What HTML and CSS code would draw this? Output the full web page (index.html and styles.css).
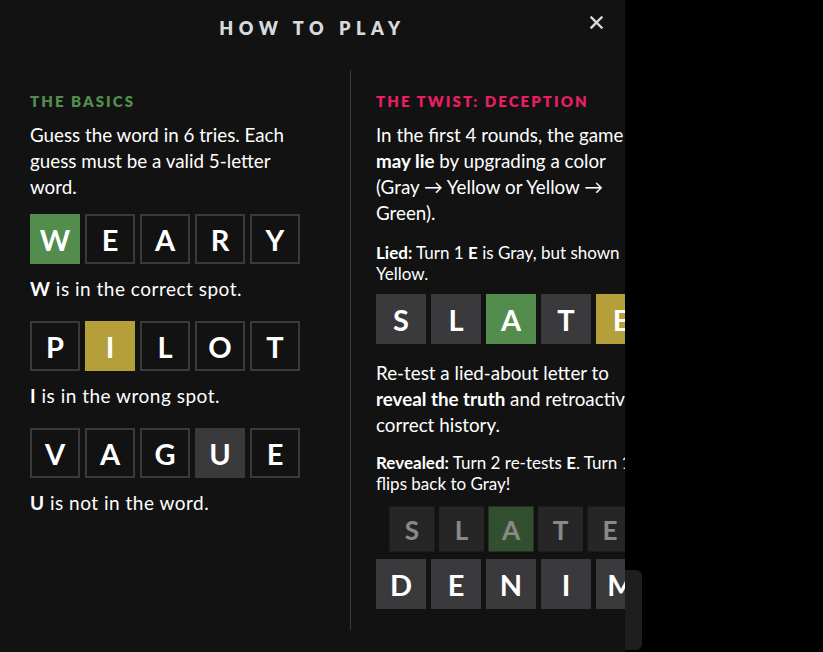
FILE: index.html
```html
<!DOCTYPE html>
<html lang="en">
<head>
<meta charset="utf-8">
<title>How to play</title>
<link rel="stylesheet" href="styles.css">
</head>
<body>
<div class="backdrop-card"></div>
<div class="modal">
  <header class="modal-header">
    <h1 class="title">HOW TO PLAY</h1>
    <button class="close" aria-label="Close">
      <svg width="13" height="13" viewBox="0 0 13 13"><path d="M1.5 1.5 L11.5 11.5 M11.5 1.5 L1.5 11.5" stroke="#d7dadc" stroke-width="2.4" stroke-linecap="square" fill="none"/></svg>
    </button>
  </header>
  <div class="columns">
    <section class="col">
      <h2 class="section-title green">THE BASICS</h2>
      <p class="text">Guess the word in 6 tries. Each guess must be a valid 5-letter word.</p>
      <div class="row first">
        <div class="tile correct">W</div><div class="tile empty">E</div><div class="tile empty">A</div><div class="tile empty">R</div><div class="tile empty">Y</div>
      </div>
      <p class="caption"><b>W</b> is in the correct spot.</p>
      <div class="row">
        <div class="tile empty">P</div><div class="tile present">I</div><div class="tile empty">L</div><div class="tile empty">O</div><div class="tile empty">T</div>
      </div>
      <p class="caption"><b>I</b> is in the wrong spot.</p>
      <div class="row">
        <div class="tile empty">V</div><div class="tile empty">A</div><div class="tile empty">G</div><div class="tile absent">U</div><div class="tile empty">E</div>
      </div>
      <p class="caption"><b>U</b> is not in the word.</p>
    </section>
    <div class="divider"></div>
    <section class="col">
      <h2 class="section-title pink">THE TWIST: DECEPTION</h2>
      <p class="text">In the first 4 rounds, the game <b>may lie</b> by upgrading a color (Gray → Yellow or Yellow → Green).</p>
      <p class="small lied"><b>Lied:</b> Turn 1 <b>E</b> is Gray, but shown Yellow.</p>
      <div class="row slate">
        <div class="tile absent">S</div><div class="tile absent">L</div><div class="tile correct">A</div><div class="tile absent">T</div><div class="tile present">E</div>
      </div>
      <p class="text retest">Re-test a lied-about letter to <b>reveal the truth</b> and retroactively correct history.</p>
      <p class="small revealed"><b>Revealed:</b> Turn 2 re-tests <b>E</b>. Turn 1 flips back to Gray!</p>
      <div class="stack">
        <div class="row faded">
          <div class="tile absent">S</div><div class="tile absent">L</div><div class="tile correct">A</div><div class="tile absent">T</div><div class="tile absent">E</div>
        </div>
        <div class="row">
          <div class="tile absent">D</div><div class="tile absent">E</div><div class="tile absent">N</div><div class="tile absent">I</div><div class="tile absent">M</div>
        </div>
      </div>
    </section>
  </div>
</div>
</body>
</html>
```
FILE: styles.css
```css
* { box-sizing: border-box; }
html, body { margin: 0; padding: 0; }
body {
  background: #000;
  width: 823px;
  height: 652px;
  overflow: hidden;
  font-family: Lato, "Noto Sans", sans-serif;
  color: #fff;
  position: relative;
}
.backdrop-card {
  position: absolute;
  left: 560px;
  top: 570px;
  width: 82px;
  height: 80px;
  background: #1e1e1e;
  border-radius: 6px;
}
.modal {
  position: relative;
  z-index: 1;
  width: 625px;
  height: 652px;
  background: #121212;
  overflow: hidden;
}
.modal-header {
  position: relative;
  padding-top: 16px;
  height: 40px;
}
.title {
  margin: 0;
  text-align: center;
  font-size: 18px;
  line-height: 24px;
  font-weight: 800;
  letter-spacing: 5.6px;
  color: #d7dadc;
}
.close {
  position: absolute;
  left: 589px;
  top: 15px;
  width: 15px;
  height: 15px;
  padding: 1px;
  border: 0;
  background: none;
  display: flex;
  align-items: center;
  justify-content: center;
}
.columns {
  margin-top: 30px;
  height: 560px;
  display: grid;
  grid-template-columns: 295px 1px 320px;
  column-gap: 25px;
  padding-left: 30px;
}
.divider { background: #3a3a3c; }
.col { padding-top: 22px; }
.section-title {
  margin: 0;
  font-size: 15px;
  line-height: 18px;
  font-weight: 800;
  letter-spacing: 2.05px;
}
.green { color: #538d4e; }
.pink { color: #e91e63; }
.text {
  margin: 12px 0 0;
  font-size: 18.8px;
  line-height: 26px;
  max-width: 276px;
}
.col .text b, .small b, .caption b { font-weight: 700; }
.row {
  display: inline-grid;
  grid-template-columns: repeat(5, 50px);
  gap: 5px;
  margin-top: 19px;
  vertical-align: top;
}
.row.first { margin-top: 14px; }
.tile {
  width: 50px;
  height: 50px;
  display: flex;
  align-items: center;
  justify-content: center;
  font-size: 29px;
  font-weight: 700;
  color: #fff;
}
.tile.empty { border: 2px solid #3a3a3c; }
.tile.correct { background: #538d4e; }
.tile.present { background: #b59f3b; }
.tile.absent { background: #3a3a3c; }
.caption {
  margin: 12px 0 0;
  font-size: 19px;
  letter-spacing: 0.5px;
  line-height: 26px;
}
.small {
  margin: 16px 0 0;
  font-size: 17px;
  line-height: 21px;
  max-width: 276px;
}
.row.slate { margin-top: 10px; }
.text.retest { margin-top: 16px; }
.small.revealed { margin-top: 14px; }
.stack {
  margin-top: 10px;
  display: grid;
  gap: 5px;
  justify-items: start;
}
.stack .row { margin-top: 0; }
.faded {
  opacity: 0.5;
  transform: scale(0.9);
}
```
